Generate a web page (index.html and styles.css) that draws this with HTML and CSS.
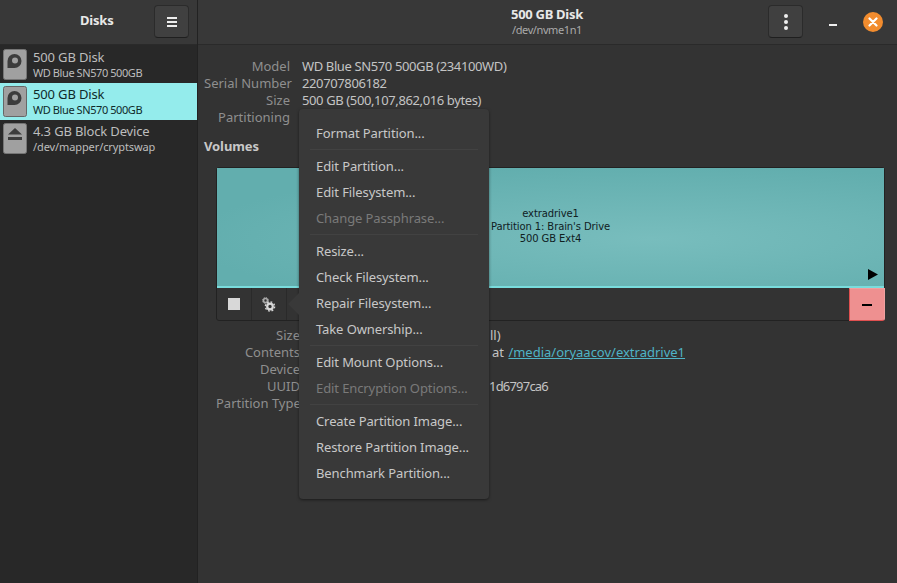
FILE: index.html
```html
<!DOCTYPE html>
<html lang="en">
<head>
<meta charset="utf-8">
<title>Disks</title>
<link rel="stylesheet" href="styles.css">
</head>
<body>
<div class="app">
  <aside class="sidebar">
    <header class="side-head">
      <span class="side-title">Disks</span>
      <button class="hbtn side-menu"><svg width="10" height="10" viewBox="0 0 10 10"><path d="M0 0h10v2H0zM0 4h10v2H0zM0 8h10v2H0z" fill="#eee"/></svg></button>
    </header>
    <ul class="devices">
      <li class="device">
        <svg class="dicon" width="24" height="31" viewBox="0 0 24 31"><rect x="0.500" y="0.500" width="23" height="30" rx="2" fill="#a0a0a0" stroke="#757575"/><path d="M4.500 12a7 7 0 1 1 7 7h-7z" fill="#3c3c3c"/><circle cx="12" cy="11.500" r="3" fill="#a0a0a0"/></svg>
        <div class="dtext"><div class="dname">500 GB Disk</div><div class="dsub">WD Blue SN570 500GB</div></div>
      </li>
      <li class="device selected">
        <svg class="dicon" width="24" height="31" viewBox="0 0 24 31"><rect x="0.500" y="0.500" width="23" height="30" rx="2" fill="#a0a0a0" stroke="#666"/><path d="M4.500 12a7 7 0 1 1 7 7h-7z" fill="#3c3c3c"/><circle cx="12" cy="11.500" r="3" fill="#a0a0a0"/></svg>
        <div class="dtext"><div class="dname">500 GB Disk</div><div class="dsub">WD Blue SN570 500GB</div></div>
      </li>
      <li class="device">
        <svg class="dicon" width="24" height="31" viewBox="0 0 24 31"><rect x="0.500" y="0.500" width="23" height="30" rx="2" fill="#a0a0a0" stroke="#757575"/><path d="M12 5l7 6.500H5zM5 14h14v3H5z" fill="#3c3c3c"/></svg>
        <div class="dtext"><div class="dname">4.3 GB Block Device</div><div class="dsub path">/dev/mapper/cryptswap</div></div>
      </li>
    </ul>
  </aside>
  <main class="main">
    <header class="main-head">
      <div class="head-title"><div class="t1">500 GB Disk</div><div class="t2">/dev/nvme1n1</div></div>
      <button class="hbtn more"><svg width="6" height="18" viewBox="0 0 6 18"><circle cx="3" cy="3" r="2" fill="#eee"/><circle cx="3" cy="9" r="2" fill="#eee"/><circle cx="3" cy="15" r="2" fill="#eee"/></svg></button>
      <span class="minimize"></span>
      <span class="close"><svg width="10" height="10" viewBox="0 0 10 10"><path d="M1.500 1.500l7 7M8.500 1.500l-7 7" stroke="#fff" stroke-width="2.200" stroke-linecap="round"/></svg></span>
    </header>
    <section class="content">
      <dl class="info top">
        <dt>Model</dt><dd>WD Blue SN570 500GB (234100WD)</dd>
        <dt>Serial Number</dt><dd>220707806182</dd>
        <dt>Size</dt><dd>500 GB (500,107,862,016 bytes)</dd>
        <dt>Partitioning</dt><dd></dd>
      </dl>
      <h2 class="volumes">Volumes</h2>
      <div class="volbox">
        <div class="graphic">
          <div class="ptext">extradrive1<br>Partition 1: Brain's Drive<br>500 GB Ext4</div>
          <svg class="play" width="10" height="11" viewBox="0 0 10 11"><path d="M0 0l10 5.500L0 11z" fill="#000"/></svg>
        </div>
        <div class="toolbar">
          <div class="tool"><span class="stop"></span></div>
          <div class="tool"><svg width="14" height="15" viewBox="0 0 14 15" fill="none"><circle cx="3.500" cy="3.500" r="2" stroke="#aaa" stroke-width="1.600"/><circle cx="3.500" cy="3.500" r="3" stroke="#aaa" stroke-width="1" stroke-dasharray="1.200 1.150"/><circle cx="8" cy="9.500" r="2.800" stroke="#d8d8d8" stroke-width="2.200"/><circle cx="8" cy="9.500" r="4.600" stroke="#d8d8d8" stroke-width="1.400" stroke-dasharray="1.800 1.810"/></svg></div>
          <div class="tool-spacer"></div>
          <div class="minus"><span></span></div>
        </div>
      </div>
      <dl class="info bottom">
        <dt>Size</dt><dd>ll)</dd>
        <dt>Contents</dt><dd class="vmount">at <a class="mount" href="#">/media/oryaacov/extradrive1</a></dd>
        <dt>Device</dt><dd></dd>
        <dt>UUID</dt><dd class="vuuid">1d6797ca6</dd>
        <dt>Partition Type</dt><dd></dd>
      </dl>
    </section>
  </main>
  <div class="popover">
    <span class="arrow"></span>
    <div class="mi">Format Partition...</div>
    <div class="sep"></div>
    <div class="mi">Edit Partition...</div>
    <div class="mi">Edit Filesystem...</div>
    <div class="mi off">Change Passphrase...</div>
    <div class="sep"></div>
    <div class="mi">Resize...</div>
    <div class="mi">Check Filesystem...</div>
    <div class="mi">Repair Filesystem...</div>
    <div class="mi">Take Ownership...</div>
    <div class="sep"></div>
    <div class="mi">Edit Mount Options...</div>
    <div class="mi off">Edit Encryption Options...</div>
    <div class="sep"></div>
    <div class="mi">Create Partition Image...</div>
    <div class="mi">Restore Partition Image...</div>
    <div class="mi">Benchmark Partition...</div>
  </div>
</div>
</body>
</html>
```
FILE: styles.css
```css
* { box-sizing: border-box; }
html, body { margin: 0; height: 100%; overflow: hidden; }
body { background: #333; color: #bdbdbd; font: 13px/17px "Noto Sans", sans-serif; }
.app { position: relative; display: flex; width: 897px; height: 583px; }

.sidebar { width: 198px; flex: none; background: #282828; border-right: 1px solid #222; display: flex; flex-direction: column; }
.side-head { height: 45px; flex: none; background: #383838; border-bottom: 1px solid #2a2a2a; display: flex; align-items: center; padding: 0 8px 1px 80px; justify-content: space-between; }
.side-title { font-weight: 700; font-size: 13px; letter-spacing: -0.2px; color: #e8e8e8; padding-bottom: 2px; }
.hbtn { width: 35px; height: 33px; padding: 0; background: #404040; border: 1px solid #2b2b2b; border-bottom-color: #1f1f1f; border-radius: 4px; display: flex; align-items: center; justify-content: center; }

.devices { list-style: none; margin: 1px 0 0; padding: 0; }
.device { height: 37px; display: flex; align-items: center; padding-left: 3px; gap: 6px; }
.device.selected { background: #94ecec; color: #0f2a2a; }
.dicon { flex: none; }
.dname { font-size: 13px; line-height: 16px; letter-spacing: -0.15px; }
.dsub { font-size: 11px; line-height: 15px; letter-spacing: -0.42px; }
.dsub.path { letter-spacing: -0.1px; }

.main { flex: 1; display: flex; flex-direction: column; min-width: 0; }
.main-head { height: 45px; flex: none; background: #383838; border-bottom: 1px solid #2a2a2a; display: flex; align-items: center; padding: 0 0 1px 313px; }
.head-title { width: 72px; white-space: nowrap; display: flex; flex-direction: column; align-items: center; padding-bottom: 2px; }
.t1 { font-weight: 700; font-size: 13px; line-height: 18px; letter-spacing: -0.3px; color: #e8e8e8; }
.t2 { font-size: 11px; line-height: 14px; letter-spacing: -0.4px; color: #aaa; }
.more { margin-left: 185px; }
.minimize { width: 8px; height: 2px; background: #eee; margin: 6px 0 0 26px; }
.close { width: 20px; height: 20px; border-radius: 50%; background: #f28c2e; margin-left: 26px; display: flex; align-items: center; justify-content: center; }

.content { padding: 13px 11px 0 6px; }
.info { display: grid; grid-template-columns: 86px 1fr; column-gap: 12px; margin: 0; line-height: 17px; white-space: nowrap; }
.info dt { text-align: right; color: #8f8f8f; }
.info dd { margin: 0; color: #c4c4c4; min-height: 17px; }
.top dd { letter-spacing: -0.38px; }
.volumes { margin: 12px 0 12px; font-size: 13px; line-height: 17px; font-weight: 700; letter-spacing: -0.1px; color: #c8c8c8; }
.volbox { margin-left: 12px; width: 669px; height: 154px; border: 1px solid #222; border-radius: 3px; display: flex; flex-direction: column; }
.graphic { height: 120px; flex: none; position: relative; background: radial-gradient(ellipse at 65% 60%, #78bdbd, #62aeae 75%); border-bottom: 2px solid #79dcdc; display: flex; align-items: center; justify-content: center; }
.ptext { font: 10px/12.500px "DejaVu Sans", sans-serif; letter-spacing: -0.1px; color: #10201f; text-align: center; white-space: nowrap; }
.play { position: absolute; right: 6px; bottom: 6px; }
.toolbar { flex: 1; display: flex; align-items: stretch; }
.tool { width: 35px; border-right: 1px solid #2a2a2a; display: flex; align-items: center; justify-content: center; }
.stop { width: 12px; height: 12px; background: #d8d8d8; }
.tool-spacer { flex: 1; }
.minus { width: 36px; margin: 0 -1px -1px 0; background: #ee9090; border: 1px solid #e05050; border-top-color: #f0a0a0; border-right-color: #f0a0a0; border-bottom-right-radius: 3px; display: flex; align-items: center; justify-content: center; }
.minus span { width: 10px; height: 2px; background: #000; }

.bottom { margin-top: 6px; margin-left: 12px; grid-template-columns: 84px 1fr; column-gap: 8px; }
.bottom dd { padding-left: 182px; }
.bottom .vmount { padding-left: 184px; }
.bottom .vuuid { padding-left: 181px; letter-spacing: -0.8px; }
.mount { color: #4fb4c6; margin-left: 1px; }

.popover { position: absolute; left: 299px; top: 109px; width: 190px; height: 390px; padding: 11px 0 0; background: #393939; border-radius: 4px; box-shadow: 0 1px 3px rgba(0,0,0,.5); font-size: 13px; letter-spacing: -0.1px; }
.arrow { position: absolute; left: -11px; top: 184px; width: 0; height: 0; border: 11px solid transparent; border-left: 0; border-right-color: #393939; }
.mi { height: 26px; line-height: 26px; padding-left: 17px; color: #c8c8c8; white-space: nowrap; }
.mi.off { color: #7a7a7a; }
.sep { height: 1px; margin: 3px 11px 3px; background: #424242; }
```
